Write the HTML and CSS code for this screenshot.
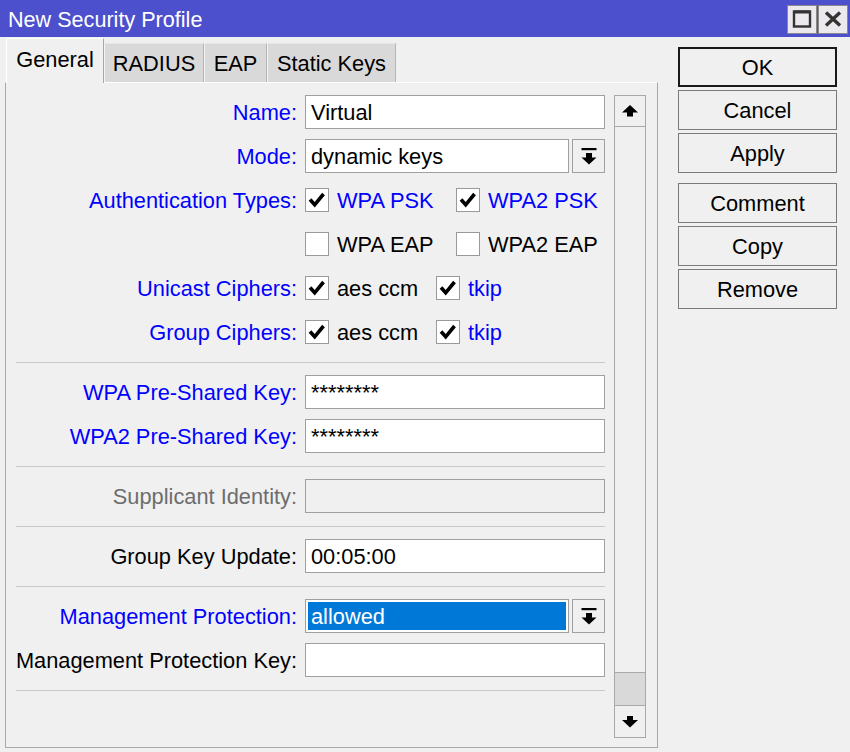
FILE: index.html
```html
<!DOCTYPE html>
<html>
<head>
<meta charset="utf-8">
<link rel="stylesheet" href="styles.css">
</head>
<body>
<div class="window">
  <div class="titlebar">
    <span class="title">New Security Profile</span>
    <div class="tbtns">
      <div class="tbtn">
        <svg width="20" height="20" viewBox="0 0 20 20"><rect x="2" y="2.5" width="16" height="15" fill="none" stroke="#333" stroke-width="2.4"/><rect x="2" y="1.5" width="16" height="3" fill="#333"/></svg>
      </div>
      <div class="tbtn">
        <svg width="20" height="20" viewBox="0 0 20 20"><path d="M3 3.5 L17 16.5 M17 3.5 L3 16.5" stroke="#333" stroke-width="3.4" fill="none"/></svg>
      </div>
    </div>
  </div>
  <div class="body">
    <div class="left">
      <div class="tabs">
        <div class="tab active w-general">General</div>
        <div class="tab w-radius">RADIUS</div>
        <div class="tab w-eap">EAP</div>
        <div class="tab w-static">Static Keys</div>
      </div>
      <div class="panel">
        <div class="form">
          <div class="row">
            <div class="label blue">Name:</div>
            <div class="field"><div class="input">Virtual</div></div>
          </div>
          <div class="row">
            <div class="label blue">Mode:</div>
            <div class="field">
              <div class="input combo">dynamic keys</div>
              <div class="dropbtn"><svg width="16" height="18" viewBox="0 0 16 18"><rect x="0.5" y="0" width="15" height="2.2" fill="#000"/><path d="M5 5 H11 V9.5 H15.5 L8 16.5 L0.5 9.5 H5 Z" fill="#000"/></svg></div>
            </div>
          </div>
          <div class="row">
            <div class="label blue">Authentication Types:</div>
            <div class="field">
              <div class="check w-auth"><span class="box"><svg width="22" height="22" viewBox="0 0 22 22"><path d="M4 10.5 L8.7 15.8 L17.5 5" stroke="#000" stroke-width="3.6" fill="none"/></svg></span><span class="blue">WPA PSK</span></div>
              <div class="check"><span class="box"><svg width="22" height="22" viewBox="0 0 22 22"><path d="M4 10.5 L8.7 15.8 L17.5 5" stroke="#000" stroke-width="3.6" fill="none"/></svg></span><span class="blue">WPA2 PSK</span></div>
            </div>
          </div>
          <div class="row">
            <div class="label"></div>
            <div class="field">
              <div class="check w-auth"><span class="box"></span><span>WPA EAP</span></div>
              <div class="check"><span class="box"></span><span>WPA2 EAP</span></div>
            </div>
          </div>
          <div class="row">
            <div class="label blue">Unicast Ciphers:</div>
            <div class="field">
              <div class="check w-cipher"><span class="box"><svg width="22" height="22" viewBox="0 0 22 22"><path d="M4 10.5 L8.7 15.8 L17.5 5" stroke="#000" stroke-width="3.6" fill="none"/></svg></span><span>aes ccm</span></div>
              <div class="check"><span class="box"><svg width="22" height="22" viewBox="0 0 22 22"><path d="M4 10.5 L8.7 15.8 L17.5 5" stroke="#000" stroke-width="3.6" fill="none"/></svg></span><span class="blue">tkip</span></div>
            </div>
          </div>
          <div class="row">
            <div class="label blue">Group Ciphers:</div>
            <div class="field">
              <div class="check w-cipher"><span class="box"><svg width="22" height="22" viewBox="0 0 22 22"><path d="M4 10.5 L8.7 15.8 L17.5 5" stroke="#000" stroke-width="3.6" fill="none"/></svg></span><span>aes ccm</span></div>
              <div class="check"><span class="box"><svg width="22" height="22" viewBox="0 0 22 22"><path d="M4 10.5 L8.7 15.8 L17.5 5" stroke="#000" stroke-width="3.6" fill="none"/></svg></span><span class="blue">tkip</span></div>
            </div>
          </div>
          <div class="sep"></div>
          <div class="row">
            <div class="label blue">WPA Pre-Shared Key:</div>
            <div class="field"><div class="input pw">********</div></div>
          </div>
          <div class="row">
            <div class="label blue">WPA2 Pre-Shared Key:</div>
            <div class="field"><div class="input pw">********</div></div>
          </div>
          <div class="sep"></div>
          <div class="row">
            <div class="label gray">Supplicant Identity:</div>
            <div class="field"><div class="input disabled"></div></div>
          </div>
          <div class="sep"></div>
          <div class="row">
            <div class="label">Group Key Update:</div>
            <div class="field"><div class="input">00:05:00</div></div>
          </div>
          <div class="sep"></div>
          <div class="row">
            <div class="label blue">Management Protection:</div>
            <div class="field">
              <div class="input combo selected"><span class="selfill">allowed</span></div>
              <div class="dropbtn"><svg width="16" height="18" viewBox="0 0 16 18"><rect x="0.5" y="0" width="15" height="2.2" fill="#000"/><path d="M5 5 H11 V9.5 H15.5 L8 16.5 L0.5 9.5 H5 Z" fill="#000"/></svg></div>
            </div>
          </div>
          <div class="row">
            <div class="label">Management Protection Key:</div>
            <div class="field"><div class="input"></div></div>
          </div>
          <div class="sep"></div>
        </div>
        <div class="scrollbar">
          <div class="sbtn"><svg width="16" height="12" viewBox="0 0 16 12"><path d="M8 0 L16 7.5 H11 V11.5 H5 V7.5 H0 Z" fill="#000"/></svg></div>
          <div class="track"></div>
          <div class="thumb"></div>
          <div class="sbtn down"><svg width="16" height="12" viewBox="0 0 16 12"><path d="M5 0 H11 V4 H16 L8 11.5 L0 4 H5 Z" fill="#000"/></svg></div>
        </div>
      </div>
    </div>
    <div class="buttons">
      <div class="btn default">OK</div>
      <div class="btn">Cancel</div>
      <div class="btn">Apply</div>
      <div class="btn gap">Comment</div>
      <div class="btn">Copy</div>
      <div class="btn">Remove</div>
    </div>
  </div>
</div>
</body>
</html>
```

FILE: styles.css
```css
html, body {
  margin: 0;
  padding: 0;
}
body {
  font-family: "Liberation Sans", Arial, sans-serif;
  font-size: 21.8px;
  color: #000;
  background: #f0f0f0;
}
.window {
  width: 850px;
  height: 752px;
  overflow: hidden;
  background: #f0f0f0;
  display: flex;
  flex-direction: column;
}
.titlebar {
  height: 37px;
  background: #4c50cc;
  display: flex;
  align-items: center;
  justify-content: space-between;
  padding-left: 8px;
  padding-right: 2px;
  box-sizing: border-box;
  flex: none;
}
.title {
  color: #fff;
  line-height: 1;
  margin-top: 2px;
  font-size: 21.6px;
}
.tbtns {
  display: flex;
  gap: 1px;
  margin-top: 1px;
}
.tbtn {
  width: 30px;
  height: 29px;
  box-sizing: border-box;
  background: #ebe9ed;
  border: 1px solid #8a8a8a;
  display: flex;
  align-items: center;
  justify-content: center;
}
.body {
  display: flex;
  flex: 1;
}
.left {
  margin-left: 5px;
  width: 653px;
  display: flex;
  flex-direction: column;
}
.tabs {
  display: flex;
  align-items: flex-end;
  height: 44px;
  margin-top: 1px;
  padding-left: 1px;
}
.tab {
  height: 39px;
  box-sizing: border-box;
  background: #d9d9d9;
  border-top: 1px solid #e6e6e6;
  border-left: 1px solid #f4f4f4;
  border-right: 1px solid #b4b4b4;
  display: flex;
  align-items: center;
  justify-content: center;
  padding-top: 2px;
}
.tab.active {
  background: #f0f0f0;
  border-top: 1px solid #fff;
  border-left: 1px solid #fff;
  border-right: 1px solid #a8a8a8;
  padding-top: 0;
  padding-bottom: 2px;
  position: relative;
  z-index: 1;
  margin-bottom: -1px;
  height: 45px;
}
.w-general { width: 98px; }
.w-radius { width: 100px; }
.w-eap { width: 63px; }
.w-static { width: 129px; }
.panel {
  height: 666px;
  box-sizing: border-box;
  border-top: 1px solid #fff;
  border-left: 1px solid #a8a8a8;
  border-right: 1px solid #a8a8a8;
  border-bottom: 1px solid #a8a8a8;
  display: flex;
  align-items: flex-start;
  padding-top: 12px;
}
.form {
  width: 599px;
  display: flex;
  flex-direction: column;
}
.row {
  display: flex;
  align-items: center;
  height: 34px;
  margin-bottom: 10px;
}
.label {
  width: 291px;
  text-align: right;
  white-space: nowrap;
  flex: none;
  padding-top: 2px;
}
.blue { color: #0000ff; }
.gray { color: #6d6d6d; }
.field {
  margin-left: 8px;
  width: 300px;
  height: 34px;
  display: flex;
  align-items: center;
}
.input {
  width: 300px;
  height: 34px;
  box-sizing: border-box;
  background: #fff;
  border: 1px solid #a0a0a0;
  padding-left: 5px;
  padding-top: 2px;
  display: flex;
  align-items: center;
  white-space: nowrap;
}
.input.pw {
  align-items: flex-start;
  padding-top: 4px;
}
.input.disabled {
  background: #f0f0f0;
}
.input.combo {
  width: 264px;
}
.input.selected {
  padding: 2px;
  align-items: stretch;
}
.selfill {
  flex: 1;
  background: #0078d7;
  color: #fff;
  display: flex;
  align-items: center;
  padding-left: 3px;
  padding-top: 2px;
}
.dropbtn {
  margin-left: 3px;
  width: 33px;
  height: 34px;
  box-sizing: border-box;
  border: 1px solid #a0a0a0;
  background: #f0f0f0;
  display: flex;
  align-items: center;
  justify-content: center;
  padding-top: 1px;
}
.check {
  display: flex;
  align-items: center;
  white-space: nowrap;
}
.check span:last-child {
  padding-top: 2px;
}
.w-auth { width: 151px; }
.w-cipher { width: 131px; }
.box {
  width: 24px;
  height: 24px;
  box-sizing: border-box;
  border: 1px solid #9a9a9a;
  background: #fff;
  margin-right: 8px;
  display: flex;
  align-items: center;
  justify-content: center;
  flex: none;
}
.check .box {
  padding-top: 0;
}
.sep {
  height: 1px;
  background: #c8c8c8;
  margin: 3px 0 12px 10px;
  width: 589px;
}
.scrollbar {
  margin-left: 9px;
  width: 32px;
  height: 643px;
  box-sizing: border-box;
  border: 1px solid #a8a8a8;
  display: flex;
  flex-direction: column;
}
.sbtn {
  height: 31px;
  box-sizing: border-box;
  border-bottom: 1px solid #a8a8a8;
  display: flex;
  align-items: center;
  justify-content: center;
  flex: none;
}
.sbtn.down {
  border-bottom: none;
  border-top: 1px solid #a8a8a8;
  height: 32px;
}
.track {
  flex: 1;
  background: #f0f0f0;
}
.thumb {
  height: 33px;
  flex: none;
  box-sizing: border-box;
  border-top: 1px solid #a8a8a8;
  background: #d9d9d9;
}
.buttons {
  margin-left: 20px;
  margin-top: 10px;
  width: 159px;
  display: flex;
  flex-direction: column;
  gap: 3px;
}
.btn {
  height: 40px;
  box-sizing: border-box;
  border: 1px solid #7a7a7a;
  background: #f0f0f0;
  display: flex;
  align-items: center;
  justify-content: center;
  padding-top: 2px;
}
.btn.default {
  border: 2px solid #1a1a1a;
}
.btn.gap {
  margin-top: 7px;
}
```
